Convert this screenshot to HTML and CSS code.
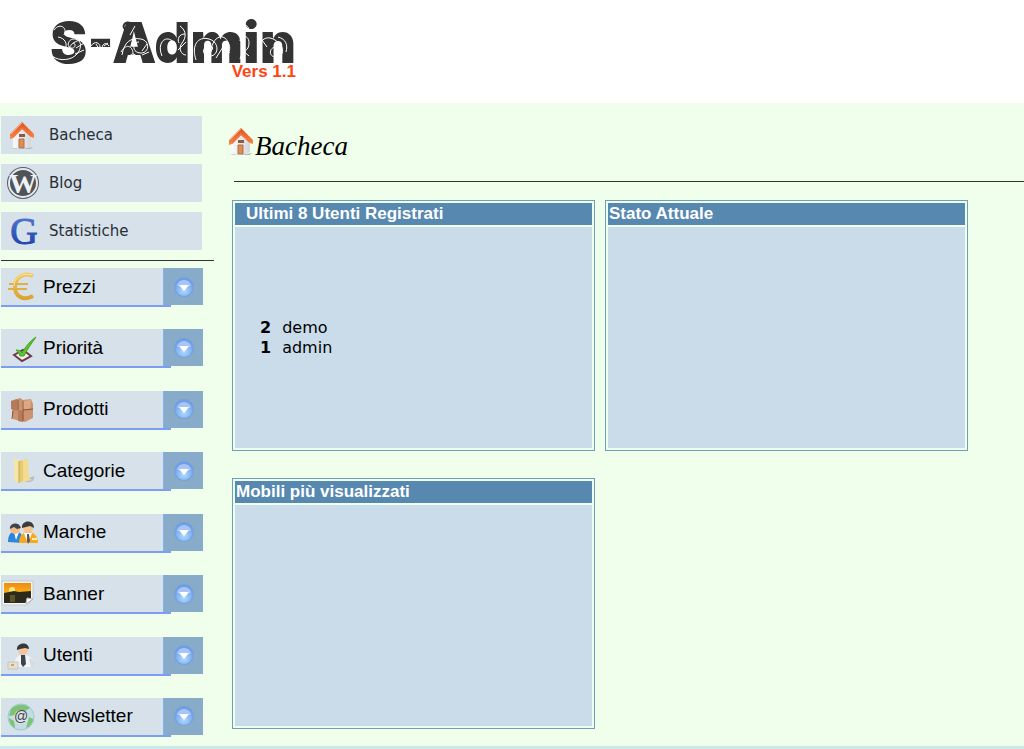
FILE: index.html
```html
<!DOCTYPE html>
<html lang="it">
<head>
    <meta charset="UTF-8">
    <meta name="viewport" content="width=device-width, initial-scale=1.0">
    <title>S-Admin</title>
    <link rel="stylesheet" href="styles.css">
</head>
<body>
    <!-- Simboli condivisi -->
    <svg class="symbols" aria-hidden="true">
        <defs>
            <linearGradient id="roof" x1="0" y1="0" x2="0" y2="1">
                <stop offset="0" stop-color="#e0501c"/>
                <stop offset="1" stop-color="#f58a4c"/>
            </linearGradient>
            <linearGradient id="wall" x1="0" y1="0" x2="1" y2="0">
                <stop offset="0" stop-color="#fafafa"/>
                <stop offset="1" stop-color="#d4d6da"/>
            </linearGradient>
            <linearGradient id="gold" x1="0" y1="0" x2="0" y2="1">
                <stop offset="0" stop-color="#f0c85c"/>
                <stop offset="1" stop-color="#dca42e"/>
            </linearGradient>
            <linearGradient id="sunset" x1="0" y1="0" x2="0" y2="1">
                <stop offset="0" stop-color="#f08a10"/>
                <stop offset="1" stop-color="#fbb41c"/>
            </linearGradient>
            <linearGradient id="blueG" x1="0" y1="0" x2="0" y2="1">
                <stop offset="0" stop-color="#5c80d4"/>
                <stop offset="1" stop-color="#1238a8"/>
            </linearGradient>
            <radialGradient id="ball" cx="0.5" cy="0.7" r="0.6">
                <stop offset="0" stop-color="#b0dcfe"/>
                <stop offset="1" stop-color="#6c9eea"/>
            </radialGradient>
        </defs>
        <symbol id="house" viewBox="0 0 24 28">
            <path d="M3 14L12 6l9 8v10l-7 3-11-1z" fill="url(#wall)"/>
            <path d="M1 26l10 1 12-2-2 2H4z" fill="#b4bab8"/>
            <path d="M9 17h5v9H9z" fill="#e88a48" stroke="#9c7460"/>
            <path d="M9 12h6v3H9z" fill="#8c5a48"/>
            <path d="M12 0L0 12v5l3-1 9-9 9 8 3 1v-4z" fill="url(#roof)"/>
            <path d="M3 13l9-8 9 8v2l-9-8-9 9z" fill="#f4743c"/>
            <path d="M12 1L1 12" stroke="#f8ac80" fill="none"/>
        </symbol>
        <symbol id="arrow" viewBox="0 0 20 20">
            <circle cx="10" cy="10" r="10" fill="#739fdc"/>
            <circle cx="10" cy="10" r="9" fill="url(#ball)"/>
            <path d="M3 9a7 6 0 0 1 14 0z" fill="#a8c4f4"/>
            <path d="M5 8h10l-5 6z" fill="#fff"/>
        </symbol>
    </svg>

    <header class="header">
        <div class="logo">
            <div class="logo-name">S-Admin</div>
            <svg class="logo-swirls" viewBox="0 0 246 46" fill="none" stroke="#fff" aria-hidden="true">
                <path d="M4 10c6-8 14-2 10 5M2 36c8 6 20 4 25-2s5-14-2-15-9 8-4 9 5-5 2-5M18 31c2-9 12-12 17-11M26 28l8-5M25 34l9-4M8 17c7 1 10 7 7 12"/>
                <path d="M41 26c4-6 9-3 9 1m2 1c1-6 5-5 7-2m-13-2l3 5m5-3l4-3"/>
                <path d="M72 35c2-13 9-18 19-16s8 15-1 14-7-11-1-11M78 40c2-8 7-7 10-2M71 32c6-10 12-5 12 2M92 31l5-7M92 35l7-3M80 15l5-9"/>
                <path d="M112 36c-5-12 2-20 9-16s5 13-2 12M130 6c7 5 6 12 2 17s-1 12 4 12M135 14c-6 0-8 5-6 9M128 30l8-8"/>
                <path d="M146 40c-5-15 2-24 13-21s10 17 1 17-8-10-1-10 2 6 0 6M161 32c1-15 12-20 17-10s-2 14-6 10M166 38l7-11M175 39c-2-6 2-9 5-6"/>
                <path d="M190 6c5-3 9 0 9 5M190 39c2-9 9-7 9-16s-9-8-9-2M191 29l8 7"/>
                <path d="M209 38c-3-14 5-25 16-18s9 17 1 17-7-10 0-10 3 6 0 6M228 17c8 2 10 8 8 15M212 20l5 7"/>
                <path d="M82 4c-7-5-12 4-5 6" stroke="#333" stroke-width="2"/>
            </svg>
            <div class="logo-version">Vers 1.1</div>
        </div>
    </header>

    <div class="layout">
        <aside class="sidebar">
            <nav class="links">
                <a class="link" href="#">
                    <svg class="link-icon" viewBox="0 0 48 38"><use href="#house" x="9" y="6" width="24" height="28"/></svg>
                    Bacheca
                </a>
                <a class="link" href="#">
                    <svg class="link-icon" viewBox="0 0 48 38">
                        <circle cx="22" cy="19" r="16" fill="#585c60"/>
                        <circle cx="22" cy="19" r="14" fill="#505458" stroke="#e4eaf0" stroke-width="2"/>
                        <text class="icon-serif" x="22" y="29" font-size="28" font-weight="bold" text-anchor="middle" fill="#eef2f6">W</text>
                    </svg>
                    Blog
                </a>
                <a class="link" href="#">
                    <svg class="link-icon" viewBox="0 0 48 38">
                        <text class="icon-serif" x="23" y="32" font-size="38" text-anchor="middle" fill="url(#blueG)" stroke="url(#blueG)">G</text>
                    </svg>
                    Statistiche
                </a>
            </nav>

            <hr class="line">

            <nav class="menu">
                <button class="menu-item" type="button">
                    <span class="menu-label">
                        <svg class="menu-icon" viewBox="0 0 42 37">
                            <path d="M32 8c-9-4-18 1-18 11s9 14 18 9" fill="none" stroke="url(#gold)" stroke-width="4"/>
                            <path d="M8 16h19M7 21h19" fill="none" stroke="#e2b040" stroke-width="2"/>
                            <path d="M31 7c-9-3-18 2-18 11" fill="none" stroke="#fae8a8"/>
                        </svg>
                        Prezzi
                    </span>
                    <span class="menu-arrow"><svg viewBox="0 0 20 20"><use href="#arrow"/></svg></span>
                </button>
                <button class="menu-item" type="button">
                    <span class="menu-label">
                        <svg class="menu-icon" viewBox="0 0 42 37">
                            <path d="M13 26l9-5 8 6-9 5z" fill="#f4f0f2" stroke="#6a3848" stroke-width="2"/>
                            <path d="M15 21c3 0 5 1 6 3 4-7 8-12 14-16-4 6-9 12-12 19h-4c-1-3-2-4-4-6z" fill="#5cc42c" stroke="#44a41c"/>
                        </svg>
                        Priorità
                    </span>
                    <span class="menu-arrow"><svg viewBox="0 0 20 20"><use href="#arrow"/></svg></span>
                </button>
                <button class="menu-item" type="button">
                    <span class="menu-label">
                        <svg class="menu-icon" viewBox="0 0 42 37">
                            <path d="M10 10l9-3 3 2 8-1 2 5v14l-8 4-5-1-7-2z" fill="#cc9370"/>
                            <path d="M10 10l6-2v12l-6-2zM17 19l5 1v11l-5-1z" fill="#b47c5c"/>
                            <path d="M21 10l9-1-1 10-8-1z" fill="#dca884"/>
                            <path d="M17 9v10m5-9v20m0-11l10-1m-20 2l-1 8" fill="none" stroke="#8c5238"/>
                        </svg>
                        Prodotti
                    </span>
                    <span class="menu-arrow"><svg viewBox="0 0 20 20"><use href="#arrow"/></svg></span>
                </button>
                <button class="menu-item" type="button">
                    <span class="menu-label">
                        <svg class="menu-icon" viewBox="0 0 42 37">
                            <path d="M24 30c6 1 10-1 9-6l-5 2z" fill="#b4c0cc"/>
                            <path d="M13 6l5 2v23l-5-3z" fill="#f4e6a8"/>
                            <path d="M18 9l9-2v20l-9 4z" fill="#e6cc70"/>
                            <path d="M22 8l5-1 1 19 3 2-9 2z" fill="#f2dc90"/>
                            <path d="M18 9v22" stroke="#c8a848"/>
                        </svg>
                        Categorie
                    </span>
                    <span class="menu-arrow"><svg viewBox="0 0 20 20"><use href="#arrow"/></svg></span>
                </button>
                <button class="menu-item" type="button">
                    <span class="menu-label">
                        <svg class="menu-icon" viewBox="0 0 42 37">
                            <path d="M7 28c0-7 3-11 8-10 5 0 7 3 7 11z" fill="#2c86dc"/>
                            <path d="M13 18l2 8 3-8z" fill="#fff"/>
                            <circle cx="14" cy="15" r="5" fill="#f2bc88"/>
                            <path d="M9 15c-1-6 9-8 11-1l-4 1-3-2z" fill="#40444a"/>
                            <path d="M18 29c0-7 4-11 9-11 6 0 10 4 10 11z" fill="#f8a820"/>
                            <path d="M23 19l4 11 4-11z" fill="#fff"/>
                            <path d="M26 20h2l1 7-2 3-1-3z" fill="#505860"/>
                            <circle cx="27" cy="14" r="5" fill="#f6c490"/>
                            <path d="M21 14c-1-8 12-9 12 0l-4-2-4 1z" fill="#3c3c40"/>
                            <path d="M31 24h5v2h-5z" fill="#fff0b8"/>
                        </svg>
                        Marche
                    </span>
                    <span class="menu-arrow"><svg viewBox="0 0 20 20"><use href="#arrow"/></svg></span>
                </button>
                <button class="menu-item" type="button">
                    <span class="menu-label">
                        <svg class="menu-icon" viewBox="0 0 42 37">
                            <path d="M1 6h31v18l-6 6H1z" fill="#f6f6f6" stroke="#c4c8cc"/>
                            <path d="M3 8h27v11H3z" fill="url(#sunset)"/>
                            <circle cx="11" cy="15" r="3" fill="#ffe87c"/>
                            <path d="M3 18l10-2 5 1 12-1v8l-6 4H3z" fill="#2c2a1c"/>
                            <path d="M9 20h5v7H9z" fill="#5c5424"/>
                            <path d="M25 29l1-6 6 1z" fill="#fff" stroke="#b4b8bc"/>
                        </svg>
                        Banner
                    </span>
                    <span class="menu-arrow"><svg viewBox="0 0 20 20"><use href="#arrow"/></svg></span>
                </button>
                <button class="menu-item" type="button">
                    <span class="menu-label">
                        <svg class="menu-icon" viewBox="0 0 42 37">
                            <path d="M13 30c0-8 3-12 9-12 7 0 11 4 13 12z" fill="#f2f4f6"/>
                            <path d="M28 22l2 8h5c-1-5-3-8-6-9z" fill="#d8dce2"/>
                            <path d="M20 18h4l1 9-3 3-2-3z" fill="#3c4450"/>
                            <circle cx="22" cy="13" r="5" fill="#f4c49a"/>
                            <path d="M16 13c-1-8 12-9 12-1l-4-1-5 1z" fill="#38383c"/>
                            <path d="M7 25h10v7H7z" fill="#e4e0d8" stroke="#c8c4bc"/>
                            <path d="M10 28h3" stroke="#e0a050" stroke-width="2"/>
                        </svg>
                        Utenti
                    </span>
                    <span class="menu-arrow"><svg viewBox="0 0 20 20"><use href="#arrow"/></svg></span>
                </button>
                <button class="menu-item" type="button">
                    <span class="menu-label">
                        <svg class="menu-icon" viewBox="0 0 42 37">
                            <circle cx="20" cy="19" r="13" fill="#c4dce4" stroke="#a0c8d0"/>
                            <path d="M10 11c5-5 14-6 19-1l-5 3-4-1-6 5-6 1zM8 20l5 3 1 7c-4-2-6-6-6-10zM28 19l4 2c0 4-3 8-7 9z" fill="#7cc474"/>
                            <circle cx="20" cy="19" r="7" fill="#dce4e6"/>
                            <text class="icon-sans" x="20" y="23" font-size="14" text-anchor="middle" fill="#3c4448">@</text>
                        </svg>
                        Newsletter
                    </span>
                    <span class="menu-arrow"><svg viewBox="0 0 20 20"><use href="#arrow"/></svg></span>
                </button>
            </nav>
        </aside>

        <main class="content">
            <h1 class="title">
                <svg class="title-icon" viewBox="0 0 24 28"><use href="#house"/></svg>
                Bacheca
            </h1>
            <hr class="line title-line">

            <div class="panels">
                <section class="panel">
                    <h2 class="panel-title panel-title-indent">Ultimi 8 Utenti Registrati</h2>
                    <div class="panel-body">
                        <table class="users">
                            <tr><th scope="row">2</th><td>demo</td></tr>
                            <tr><th scope="row">1</th><td>admin</td></tr>
                        </table>
                    </div>
                </section>
                <section class="panel">
                    <h2 class="panel-title">Stato Attuale</h2>
                    <div class="panel-body"></div>
                </section>
                <section class="panel">
                    <h2 class="panel-title">Mobili più visualizzati</h2>
                    <div class="panel-body"></div>
                </section>
            </div>
        </main>
    </div>

    <footer class="footer"></footer>
</body>
</html>
```
FILE: styles.css
```css
* {
    box-sizing: border-box;
}

body {
    margin: 0;
    min-height: 100vh;
    display: flex;
    flex-direction: column;
    font-family: "Liberation Sans", Arial, sans-serif;
    color: #000;
    background-color: #efffeb;
}

.symbols {
    position: absolute;
    width: 0;
    height: 0;
}

/* Intestazione */
.header {
    height: 103px;
    padding: 20px 50px;
    background-color: #fff;
}

.logo {
    position: relative;
    width: 246px;
}

.logo-name {
    font-family: Inter, sans-serif;
    font-size: 56px;
    font-weight: 900;
    line-height: 46px;
    color: #333;
    white-space: nowrap;
}

/* Riccioli bianchi sopra le lettere */
.logo-swirls {
    position: absolute;
    top: 0;
    left: 0;
    width: 246px;
    height: 46px;
}

.logo-version {
    font-size: 17px;
    font-weight: bold;
    line-height: 12px;
    text-align: right;
    color: #ff4411;
}

.layout {
    flex: 1;
    display: flex;
}

/* Colonna sinistra */
.sidebar {
    flex: none;
    display: flex;
    flex-direction: column;
    width: 214px;
    padding: 13px 0 9px 1px;
}

.links {
    display: flex;
    flex-direction: column;
    gap: 10px;
    width: 201px;
}

.link {
    display: flex;
    align-items: center;
    height: 38px;
    font-family: "DejaVu Sans", Verdana, sans-serif;
    font-size: 15px;
    color: #2a2e34;
    text-decoration: none;
    background-color: #d6e1ea;
}

.link-icon {
    flex: none;
    width: 48px;
    height: 38px;
    overflow: visible;
}

.icon-serif {
    font-family: "Liberation Serif", serif;
}

.icon-sans {
    font-family: "Liberation Sans", sans-serif;
}

.line {
    width: 100%;
    height: 1px;
    margin: 10px 0 7px;
    border: none;
    background-color: #333;
}

.menu {
    flex: 1;
    display: flex;
    flex-direction: column;
    justify-content: space-between;
    width: 202px;
}

.menu-item {
    position: relative;
    display: flex;
    width: 100%;
    height: 39px;
    padding: 0 0 2px;
    border: none;
    font-family: inherit;
    font-size: 19px;
    color: #000;
    background: none;
    cursor: pointer;
}

.menu-item::after {
    content: "";
    position: absolute;
    left: 0;
    bottom: 0;
    width: 170px;
    height: 2px;
    background-color: #7d9df2;
}

.menu-label {
    flex: 1;
    display: flex;
    align-items: center;
    height: 37px;
    background-color: #d6e1ea;
}

.menu-icon {
    flex: none;
    width: 42px;
    height: 37px;
}

.menu-arrow {
    display: flex;
    align-items: center;
    justify-content: center;
    width: 40px;
    height: 37px;
    border-left: 1px solid #7fb2f0;
    background-color: #87abc8;
}

.menu-arrow svg {
    width: 20px;
    height: 20px;
}

/* Contenuto */
.content {
    flex: 1;
    padding: 24px 0 17px 18px;
}

.title {
    display: flex;
    align-items: center;
    height: 38px;
    margin: 0 0 0 -3px;
    font-family: "Monotype Corsiva", "Liberation Serif", serif;
    font-size: 27px;
    font-style: italic;
    font-weight: normal;
}

.title-icon {
    width: 24px;
    height: 28px;
    margin: 0 2px 8px 0;
}

.title-line {
    width: auto;
    margin: 16px 0 18px 2px;
}

.panels {
    display: grid;
    grid-template-columns: repeat(2, minmax(0, 363px));
    gap: 27px 10px;
}

.panel {
    padding: 2px;
    border: 1px solid #6f9dbc;
}

.panel-title {
    margin: 0 0 2px;
    padding: 0 1px;
    font-size: 17px;
    line-height: 22px;
    color: #fff;
    background-color: #5788b0;
}

.panel-title-indent {
    padding-left: 11px;
}

.panel-body {
    display: flex;
    align-items: center;
    height: 221px;
    background-color: #cadcea;
}

.users {
    margin-left: 24px;
    border-spacing: 0;
    font-family: "DejaVu Sans", Verdana, sans-serif;
    font-size: 16px;
    line-height: 20px;
}

.users th,
.users td {
    padding: 0 10px 0 1px;
    text-align: left;
}

.footer {
    height: 3px;
    background-color: #cde8e8;
}
```
